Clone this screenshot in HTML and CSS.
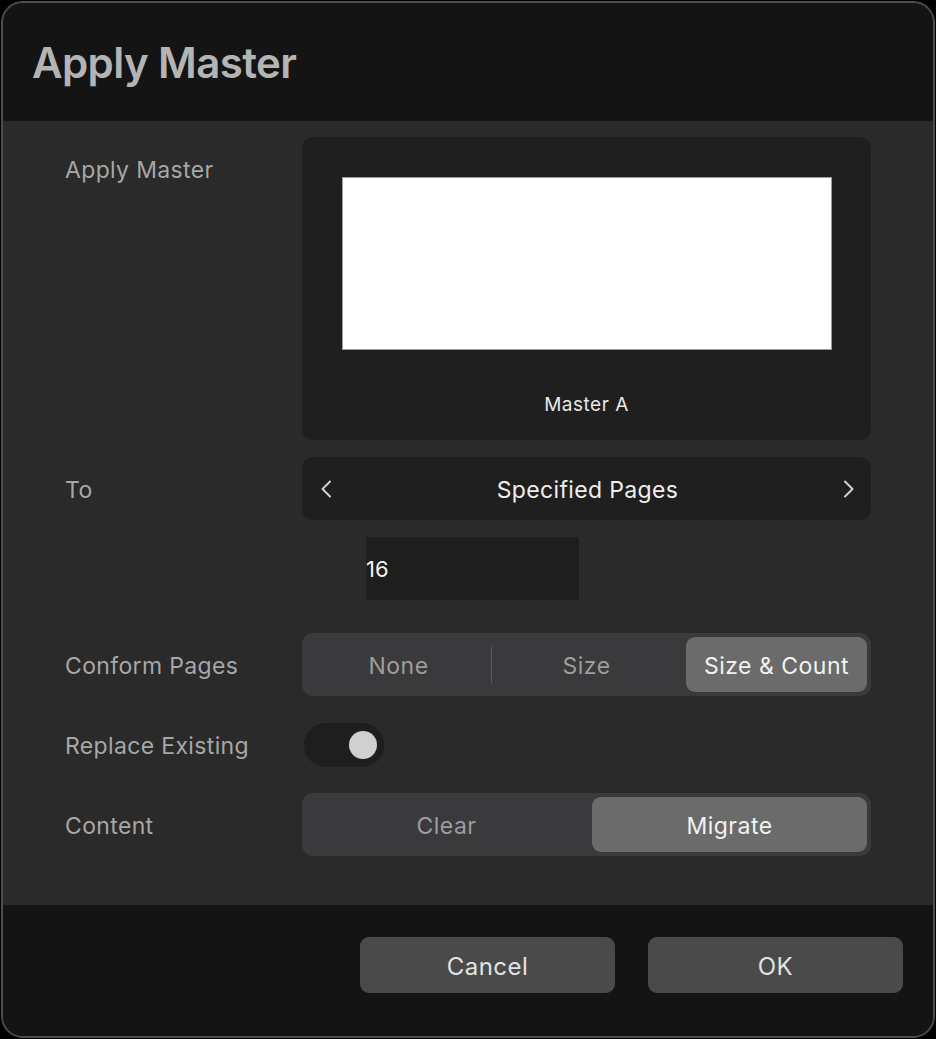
FILE: index.html
```html
<!DOCTYPE html>
<html lang="en">
<head>
<meta charset="utf-8">
<title>Apply Master</title>
<link rel="stylesheet" href="styles.css">
</head>
<body>
<div class="window">
  <header class="header">
    <h1 class="title">Apply Master</h1>
  </header>
  <main class="body">
    <div class="label">Apply Master</div>
    <div class="preview">
      <div class="page"></div>
      <div class="preview-name">Master A</div>
    </div>

    <div class="label">To</div>
    <div class="stepper">
      <svg class="chev" width="14" height="18" viewBox="0 0 14 18"><path d="M11 1.5 L3.5 9 L11 16.5" fill="none" stroke="#d2d2d2" stroke-width="2" stroke-linecap="round" stroke-linejoin="round"/></svg>
      <span class="stepper-value">Specified Pages</span>
      <svg class="chev" width="14" height="18" viewBox="0 0 14 18"><path d="M3 1.5 L10.5 9 L3 16.5" fill="none" stroke="#d2d2d2" stroke-width="2" stroke-linecap="round" stroke-linejoin="round"/></svg>
    </div>

    <div class="spacer"></div>
    <div class="input-wrap"><div class="input">16</div></div>

    <div class="label gap-lg">Conform Pages</div>
    <div class="segmented three gap-lg">
      <div class="seg first">None</div>
      <div class="divider"></div>
      <div class="seg">Size</div>
      <div class="seg selected">Size &amp; Count</div>
    </div>

    <div class="label toggle-label">Replace Existing</div>
    <div class="toggle-row"><div class="toggle"><div class="knob"></div></div></div>

    <div class="label">Content</div>
    <div class="segmented two">
      <div class="seg">Clear</div>
      <div class="seg selected">Migrate</div>
    </div>
  </main>
  <footer class="footer">
    <button class="btn">Cancel</button>
    <button class="btn">OK</button>
  </footer>
</div>
</body>
</html>
```

FILE: styles.css
```css
* { box-sizing: border-box; }
html, body { margin: 0; padding: 0; background: #000; }
body {
  font-family: Inter, "Noto Sans", "Liberation Sans", sans-serif;
  width: 936px;
  height: 1039px;
  overflow: hidden;
}
.window {
  margin: 1px 1px 0 1px;
  width: 934px;
  height: 1037px;
  border: 2px solid #4e4e4e;
  border-radius: 22px;
  overflow: hidden;
  display: flex;
  flex-direction: column;
  background: #141414;
}
.header {
  height: 118px;
  flex: none;
  background: #141414;
  display: flex;
  align-items: center;
  padding-left: 29px;
}
.title {
  margin: 0;
  font-size: 42px;
  font-weight: 600;
  color: #b4b4b4;
  letter-spacing: -0.6px;
  padding-top: 0;
}
.body {
  flex: none;
  height: 784px;
  background: #2a2a2a;
  display: grid;
  grid-template-columns: 237px 569px;
  column-gap: 0;
  row-gap: 17px;
  padding: 16px 0 0 62px;
  align-content: start;
}
.label {
  font-size: 23px;
  color: #a7a7a7;
  line-height: 60px;
  padding-top: 3px;
  height: 63px;
  letter-spacing: 0.35px;
}
.gap-lg { margin-top: 16px; }
.toggle-label {
  line-height: 42px;
  padding-top: 2px;
  height: 44px;
  margin-top: 10px;
  margin-bottom: 9px;
}
.toggle-row { margin-top: 10px; margin-bottom: 9px; height: 44px; padding-left: 2px; }
.preview {
  height: 303px;
  background: #1f1f1f;
  border-radius: 11px;
  display: flex;
  flex-direction: column;
  align-items: center;
  padding-top: 40px;
}
.page {
  width: 490px;
  height: 173px;
  background: #fff;
  border: 1px solid #9a9a9a;
}
.preview-name {
  margin-top: 43px;
  font-size: 19px;
  color: #e8e8e8;
  letter-spacing: 0.5px;
}
.stepper {
  height: 63px;
  background: #1f1f1f;
  border-radius: 11px;
  display: flex;
  align-items: center;
  justify-content: space-between;
  padding: 0 15px 0 17px;
}
.stepper-value {
  font-size: 23px;
  color: #efefef;
  letter-spacing: 0.35px;
  padding-top: 2px;
}
.chev { display: block; }
.spacer { height: 63px; }
.input-wrap { padding-left: 64px; }
.input {
  width: 213px;
  height: 63px;
  background: #1e1e1e;
  color: #f4f4f4;
  font-size: 22px;
  line-height: 65px;
}
.segmented {
  height: 63px;
  background: #3a3a3c;
  border-radius: 11px;
  padding: 4px;
  display: flex;
  align-items: center;
}
.seg {
  flex: 1 1 0;
  height: 100%;
  display: flex;
  align-items: center;
  justify-content: center;
  font-size: 23px;
  color: #9d9d9d;
  letter-spacing: 0.5px;
  border-radius: 9px;
  padding-top: 2px;
}
.seg.selected {
  background: #6b6b6b;
  color: #f2f2f2;
}
.three .seg.first { flex: 0 0 185px; }
.three .seg.selected { flex: 0 0 181px; margin-left: 5px; }
.two .seg.selected { flex: 0 0 275px; margin-left: 5px; }
.divider {
  width: 1px;
  height: 36px;
  background: #5a5a5c;
  flex: none;
}
.toggle {
  width: 80px;
  height: 44px;
  border-radius: 22px;
  background: #1e1e1e;
  display: flex;
  align-items: center;
  justify-content: flex-end;
  padding-right: 7px;
}
.knob {
  width: 28px;
  height: 28px;
  border-radius: 50%;
  background: #d0d0d0;
}
.footer {
  flex: 1;
  background: #141414;
  display: flex;
  justify-content: flex-end;
  gap: 33px;
  padding: 32px 30px 0 0;
}
.btn {
  width: 255px;
  height: 56px;
  border: none;
  border-radius: 9px;
  background: #4a4a4a;
  color: #e2e2e2;
  font-family: inherit;
  font-size: 24px;
  letter-spacing: 0.5px;
  padding: 2px 0 0 0;
}
```
